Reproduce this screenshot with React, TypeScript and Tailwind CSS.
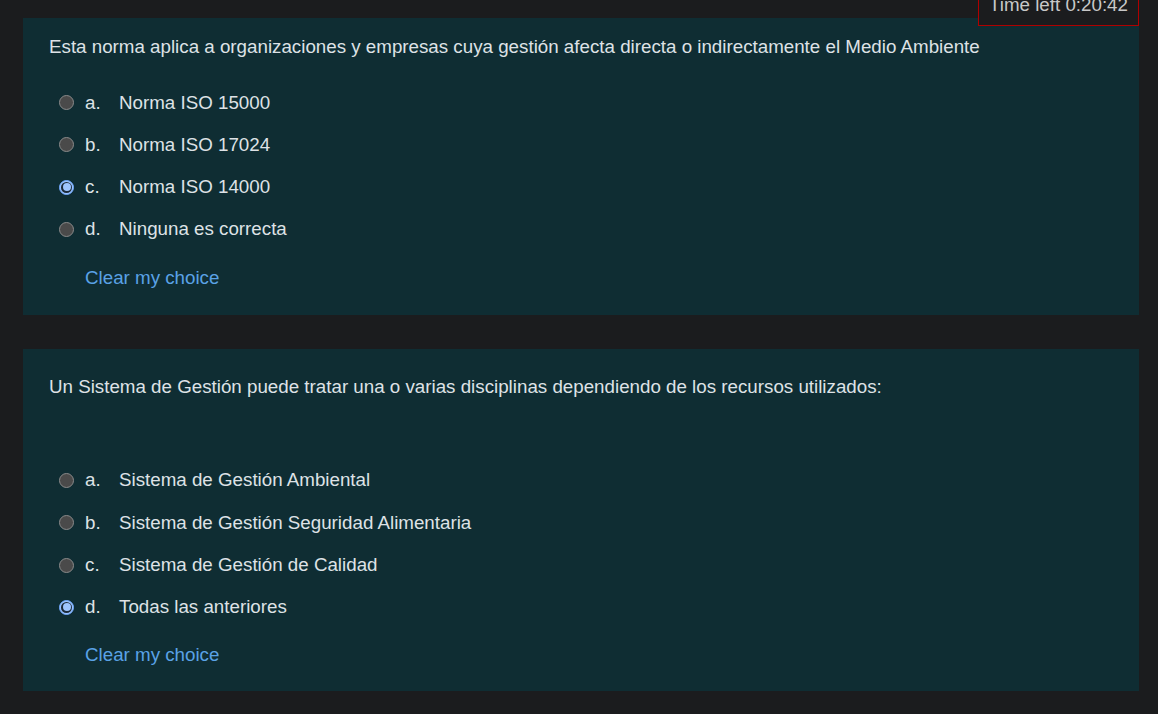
import React from 'react';

type Option = { letter: string; text: string; checked?: boolean };

const Radio: React.FC<{ checked?: boolean }> = ({ checked }) =>
  checked ? (
    <span className="w-[15px] h-[15px] rounded-full bg-[#9ec5fe] border border-[#6ea8fe] flex items-center justify-center shrink-0">
      <span className="w-[11px] h-[11px] rounded-full bg-[#1b2a3a] flex items-center justify-center">
        <span className="w-[8px] h-[8px] rounded-full bg-[#9ec5fe]" />
      </span>
    </span>
  ) : (
    <span className="w-[15px] h-[15px] rounded-full bg-[#4a4a4a] border border-[#8a8a8a] shrink-0" />
  );

const Question: React.FC<{ text: string; options: Option[]; second?: boolean }> = ({ text, options, second }) => (
  <div className={`bg-[#0f2d33] px-[26px] ${second ? 'pt-[26px] pb-[26px]' : 'pt-[17px] pb-[27px]'}`}>
    <p className={second ? 'mb-[71px]' : 'mb-[33px]'}>{text}</p>
    <div className="flex flex-col gap-[21.33px] pl-[10px]">
      {options.map((o) => (
        <label key={o.letter} className="flex items-center h-[21px]">
          <Radio checked={o.checked} />
          <span className="ml-[11px] w-[34px]">{o.letter}.</span>
          <span>{o.text}</span>
        </label>
      ))}
    </div>
    <a className={`block ml-[36px] text-[#5aa2e6] leading-[21px] ${second ? 'mt-[26px]' : 'mt-[27px]'}`}>Clear my choice</a>
  </div>
);

export default function App() {
  return (
    <div className="relative min-h-[714px] bg-[#1b1c1e] text-[#dee2e6] text-[18.75px] leading-[24px] pl-[23px] pr-[19px] pt-[18px] pb-[21px] overflow-hidden" style={{ fontFamily: '"Liberation Sans", Arial, sans-serif' }}>
      <div className="absolute right-[19px] top-[-10px] w-[161px] h-[36px] border border-[#b00000] bg-[#1b1c1e] flex items-end justify-center pb-[8px] text-[#c8c8c8] z-10">
        Time left 0:20:42
      </div>
      <div className="flex flex-col gap-[34px]">
        <Question
          text="Esta norma aplica a organizaciones y empresas cuya gestión afecta directa o indirectamente el Medio Ambiente"
          options={[
            { letter: 'a', text: 'Norma ISO 15000' },
            { letter: 'b', text: 'Norma ISO 17024' },
            { letter: 'c', text: 'Norma ISO 14000', checked: true },
            { letter: 'd', text: 'Ninguna es correcta' },
          ]}
        />
        <Question
          second
          text="Un Sistema de Gestión puede tratar una o varias disciplinas dependiendo de los recursos utilizados:"
          options={[
            { letter: 'a', text: 'Sistema de Gestión Ambiental' },
            { letter: 'b', text: 'Sistema de Gestión Seguridad Alimentaria' },
            { letter: 'c', text: 'Sistema de Gestión de Calidad' },
            { letter: 'd', text: 'Todas las anteriores', checked: true },
          ]}
        />
      </div>
    </div>
  );
}
